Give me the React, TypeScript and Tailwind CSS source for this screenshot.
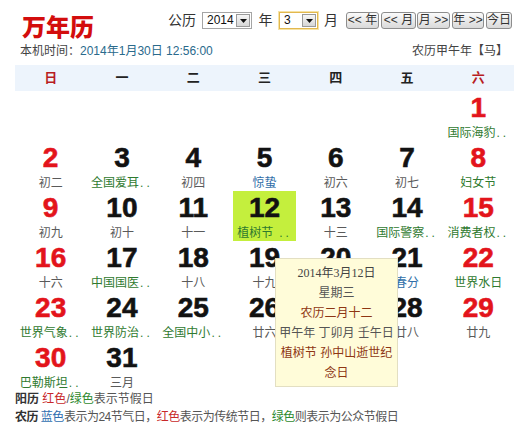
import React from "react";

type C = "g" | "gr" | "b" | "r";
type Cell = { d: number; s: string; c: C; t?: boolean } | null;

const rows: Cell[][] = [
  [null, null, null, null, null, null, { d: 1, s: "国际海豹", c: "gr", t: true }],
  [
    { d: 2, s: "初二", c: "g" },
    { d: 3, s: "全国爱耳", c: "gr", t: true },
    { d: 4, s: "初四", c: "g" },
    { d: 5, s: "惊蛰", c: "b" },
    { d: 6, s: "初六", c: "g" },
    { d: 7, s: "初七", c: "g" },
    { d: 8, s: "妇女节", c: "gr" },
  ],
  [
    { d: 9, s: "初九", c: "g" },
    { d: 10, s: "初十", c: "g" },
    { d: 11, s: "十一", c: "g" },
    { d: 12, s: "植树节", c: "gr", t: true },
    { d: 13, s: "十三", c: "g" },
    { d: 14, s: "国际警察", c: "gr", t: true },
    { d: 15, s: "消费者权", c: "gr", t: true },
  ],
  [
    { d: 16, s: "十六", c: "g" },
    { d: 17, s: "中国国医", c: "gr", t: true },
    { d: 18, s: "十八", c: "g" },
    { d: 19, s: "十九", c: "g" },
    { d: 20, s: "二十", c: "g" },
    { d: 21, s: "春分", c: "b" },
    { d: 22, s: "世界水日", c: "gr" },
  ],
  [
    { d: 23, s: "世界气象", c: "gr", t: true },
    { d: 24, s: "世界防治", c: "gr", t: true },
    { d: 25, s: "全国中小", c: "gr", t: true },
    { d: 26, s: "廿六", c: "g" },
    { d: 27, s: "廿七", c: "g" },
    { d: 28, s: "廿八", c: "g" },
    { d: 29, s: "廿九", c: "g" },
  ],
  [
    { d: 30, s: "巴勒斯坦", c: "gr", t: true },
    { d: 31, s: "三月", c: "g" },
    null,
    null,
    null,
    null,
    null,
  ],
];

const subColor: Record<C, string> = {
  g: "text-[#5a5a5a]",
  gr: "text-[#2f7a2f]",
  b: "text-[#2f6ea8]",
  r: "text-[#c8201f]",
};

const week = ["日", "一", "二", "三", "四", "五", "六"];

function Select({ value, w, focus }: { value: string; w: string; focus?: boolean }) {
  return (
    <div
      className={`${w} h-[17px] flex items-center bg-white border ${
        focus ? "border-[#e2b84f] shadow-[0_0_0_1px_#f6e3a6]" : "border-[#a5a5a5]"
      }`}
    >
      <span className="flex-1 pl-[4px] text-[12px] leading-[15px] text-[#111]">{value}</span>
      <div className="w-[14px] h-[13px] mr-[1px] border border-[#9a9a9a] bg-gradient-to-b from-[#f6f6f6] to-[#d6d6d6] flex items-center justify-center">
        <svg width="7" height="4" viewBox="0 0 7 4">
          <path d="M0 0 L7 0 L3.5 4 Z" fill="#111" />
        </svg>
      </div>
    </div>
  );
}

function Btn({ label, w, ml }: { label: string; w: string; ml: string }) {
  return (
    <div
      className={`${w} ${ml} h-[17px] flex items-center justify-center rounded-[3px] border border-[#8d8d8d] bg-gradient-to-b from-[#fbfbfb] to-[#d9d9d9] text-[12px] leading-[15px] text-[#333] whitespace-nowrap`}
    >
      {label}
    </div>
  );
}

export default function App() {
  return (
    <div className="relative w-[528px] h-[445px] bg-white overflow-hidden font-['Liberation_Sans','Noto_Sans_CJK_SC',sans-serif] text-[#333]">
      <div className="pl-[15px] pr-[14px] pt-[12px]">
        {/* top row */}
        <div className="flex items-start">
          <div className="w-[153px] pl-[7px] text-[24px] leading-[28px] font-black text-[#d30d0d] font-['Noto_Sans_CJK_SC',serif]">
            万年历
          </div>
          <div className="w-[34px] text-[14px] leading-[17px] text-[#333]">公历</div>
          <Select value="2014" w="w-[50px]" />
          <div className="w-[27px] text-center text-[14px] leading-[17px]">年</div>
          <Select value="3" w="w-[39px]" focus />
          <div className="w-[28px] pl-[6px] text-[14px] leading-[17px]">月</div>
          <Btn label="<< 年" w="w-[33px]" ml="ml-0" />
          <Btn label="<< 月" w="w-[35px]" ml="ml-[2px]" />
          <Btn label="月 >>" w="w-[33px]" ml="ml-[1px]" />
          <Btn label="年 >>" w="w-[32px]" ml="ml-[2px]" />
          <Btn label="今日" w="w-[26px]" ml="ml-[2px]" />
        </div>

        {/* second row */}
        <div className="flex items-center mt-[3px] h-[16px] text-[12px] leading-[16px]">
          <div className="pl-[5px] text-[#444]">
            本机时间：<span className="text-[#2a6a8c]">2014年1月30日 12:56:00</span>
          </div>
          <div className="ml-auto pr-[6px] text-[#444]">农历甲午年【马】</div>
        </div>

        {/* header */}
        <div className="mt-[6px] w-[499px] h-[26px] bg-[#edf4fc] grid grid-cols-7 items-center">
          {week.map((w, i) => (
            <div
              key={w}
              className={`text-center text-[13px] leading-[26px] font-bold ${
                i === 0 || i === 6 ? "text-[#b81c22]" : "text-[#222]"
              }`}
            >
              {w}
            </div>
          ))}
        </div>

        {/* days */}
        <div className="w-[499px]">
          {rows.map((r, ri) => (
            <div key={ri} className="grid grid-cols-7 h-[50px]">
              {r.map((c, ci) => (
                <div key={ci} className="h-[50px] px-[4px]">
                  {c && (
                    <div
                      className={`h-[50px] flex flex-col items-center ${
                        c.d === 12 ? "bg-[#c4ef3d]" : ""
                      }`}
                    >
                      <div
                        className={`text-[28px] leading-[34px] font-bold [-webkit-text-stroke:0.6px_currentColor] ${
                          ci === 0 || ci === 6 ? "text-[#e3141b]" : "text-[#121212]"
                        }`}
                      >
                        {c.d}
                      </div>
                      <div className={`text-[12px] leading-[16px] whitespace-nowrap ${subColor[c.c]}`}>
                        {c.s}
                        {c.t && (
                          <span className={`${c.d === 12 ? "ml-[6px]" : "ml-[1px]"} tracking-[3px]`}>..</span>
                        )}
                      </div>
                    </div>
                  )}
                </div>
              ))}
            </div>
          ))}
        </div>

        {/* legend */}
        <div className="-mt-[1px] text-[12px] leading-[18px] text-[#555]">
          <div>
            <span className="font-bold text-[#333]">阳历</span>{" "}
            <span className="text-[#c8282a]">红色</span>/<span className="text-[#2f8a2f]">绿色</span>表示节假日
          </div>
          <div className="tracking-[-0.5px]">
            <span className="font-bold text-[#333]">农历</span>{" "}
            <span className="text-[#2f6eb0]">蓝色</span>表示为24节气日，
            <span className="text-[#c8282a]">红色</span>表示为传统节日，
            <span className="text-[#2f8a2f]">绿色</span>则表示为公众节假日
          </div>
        </div>
      </div>

      {/* tooltip */}
      <div className="absolute left-[275px] top-[258px] w-[123px] h-[129px] bg-[#fffcd9] border border-[#e3dfc2] py-[4px] text-center text-[12px] leading-[20px] text-[#555]">
        <div className="font-['Liberation_Serif','Noto_Sans_CJK_SC',serif] text-[#444]">2014年3月12日</div>
        <div>星期三</div>
        <div className="text-[#8e3613]">农历二月十二</div>
        <div>甲午年 丁卯月 壬午日</div>
        <div className="text-[#8e3613]">植树节 孙中山逝世纪</div>
        <div className="text-[#8e3613]">念日</div>
      </div>
    </div>
  );
}
